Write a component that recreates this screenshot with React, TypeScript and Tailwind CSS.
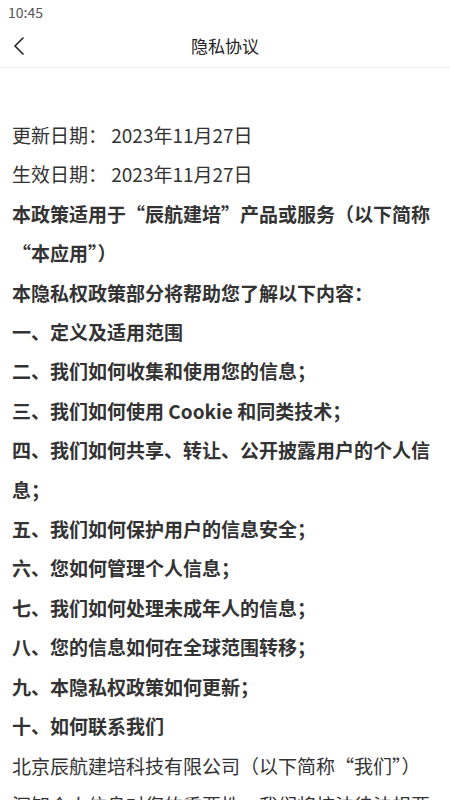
import React from 'react';

const FONT = '"Noto Sans CJK SC", "Noto Sans", sans-serif';

const LINES: { text: React.ReactNode; bold?: boolean }[] = [
  { text: '更新日期： 2023年11月27日' },
  { text: '生效日期： 2023年11月27日' },
  {
    text: (
      <>
        本政策适用于“辰航建培”产品或服务（以下简称<wbr />“本应用”）
      </>
    ),
    bold: true,
  },
  { text: '本隐私权政策部分将帮助您了解以下内容：', bold: true },
  { text: '一、定义及适用范围', bold: true },
  { text: '二、我们如何收集和使用您的信息；', bold: true },
  { text: '三、我们如何使用 Cookie 和同类技术；', bold: true },
  { text: '四、我们如何共享、转让、公开披露用户的个人信息；', bold: true },
  { text: '五、我们如何保护用户的信息安全；', bold: true },
  { text: '六、您如何管理个人信息；', bold: true },
  { text: '七、我们如何处理未成年人的信息；', bold: true },
  { text: '八、您的信息如何在全球范围转移；', bold: true },
  { text: '九、本隐私权政策如何更新；', bold: true },
  { text: '十、如何联系我们', bold: true },
  {
    text: (
      <>
        北京辰航建培科技有限公司（以下简称“我们”）<wbr />深知个人信息对您的重要性，我们将按法律法规要求，采取相应安全保护措施，尽力保护您的个人信息安全可控。
      </>
    ),
  },
];

export default function App() {
  return (
    <div className="w-[450px] h-[800px] overflow-hidden bg-white" style={{ fontFamily: FONT }}>
      {/* Status bar */}
      <div className="h-6 px-2 flex items-center text-[14px] text-[#555]">10:45</div>

      {/* Header */}
      <div className="relative h-[44px] flex items-center justify-center border-b border-[#f0f0f0]">
        <button className="absolute left-3 top-0 h-full flex items-center">
          <svg width="14" height="20" viewBox="0 0 14 20" fill="none">
            <path d="M11 2 L3 10 L11 18" stroke="#222" strokeWidth="1.6" strokeLinecap="round" strokeLinejoin="round" />
          </svg>
        </button>
        <span className="text-[17px] text-[#222]">隐私协议</span>
      </div>

      {/* Content */}
      <div className="px-3 pt-[47px] text-[19px] leading-[39.4px] text-[#333]">
        {LINES.map((line, i) => (
          <p key={i} className={line.bold ? 'font-bold' : 'font-normal'}>
            {line.text}
          </p>
        ))}
      </div>
    </div>
  );
}
